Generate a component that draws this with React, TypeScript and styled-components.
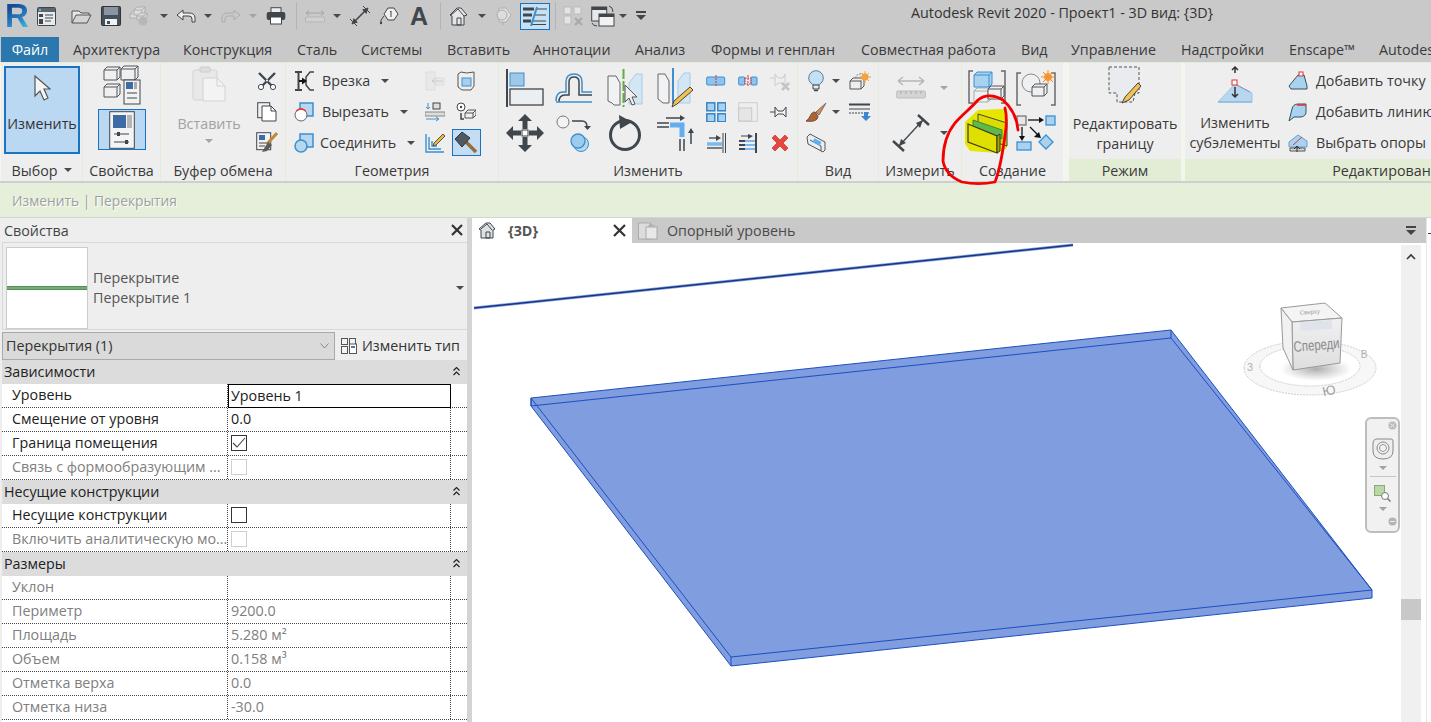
import React from 'react';
import styled, { createGlobalStyle } from 'styled-components';

const FS = '14.3px';

const Global = createGlobalStyle`
  html, body { margin: 0; padding: 0; background: #fff; }
  body { font-family: "Open Sans", "Noto Sans", sans-serif; font-size: ${FS}; color: #333; }
`;

const Page = styled.div`
  position: relative; width: 1431px; height: 722px; overflow: hidden; background: #fff;
  display: flex; flex-direction: column;
`;
const Glyph = styled.svg`display: block; flex-shrink: 0;`;
const g = (w: number, h: number, body: React.ReactNode) => (
  <Glyph width={w} height={h} viewBox={`0 0 ${w} ${h}`}>{body}</Glyph>
);

const Caret = styled.span<{ $grey?: boolean; $gap?: number }>`
  display: block; flex-shrink: 0; width: 0; height: 0;
  margin-left: ${p => p.$gap ?? 0}px;
  border-left: 4px solid transparent; border-right: 4px solid transparent;
  border-top: 4px solid ${p => (p.$grey ? '#a4a4a4' : '#4a4a4a')};
`;

/* ---------- top chrome ---------- */
const Chrome = styled.header`background: #c9c9c9; height: 62px; flex-shrink: 0; display: flex; flex-direction: column;`;
const TitleBar = styled.div`height: 37px; display: flex; align-items: flex-start;`;
const Qat = styled.div`width: 911px; height: 32px; padding-left: 4px; box-sizing: border-box; display: flex; align-items: center; flex-shrink: 0;`;
const QatSlot = styled.div<{ $w: number }>`width: ${p => p.$w}px; flex-shrink: 0; display: flex; justify-content: center; align-items: center;`;
const QatDivider = styled.span`width: 1px; height: 28px; flex-shrink: 0; background: #b4b4b4;`;
const QatToggle = styled.div`
  width: 30px; height: 27px; margin-left: 4px; flex-shrink: 0; box-sizing: border-box; border: 1px solid #1473c5; background: #c8e0f4;
  display: flex; align-items: center; justify-content: center;
`;
const LogoR = styled.span`
  font-family: "Liberation Sans", sans-serif; font-weight: 700; font-size: 33px; line-height: 28px;
  background: linear-gradient(150deg, #154a94 20%, #2a80c4 60%, #3cb6e8 90%);
  -webkit-background-clip: text; background-clip: text; color: transparent;
`;
const LetterA = styled.span`
  font-family: "Liberation Sans", sans-serif; font-weight: 700; font-size: 25px; line-height: 26px; color: ${'#3f464c'};
`;
const AppTitle = styled.div`font-size: ${FS}; line-height: 26px; color: #333; white-space: nowrap;`;
const TabBar = styled.nav`height: 25px; display: flex; align-items: stretch; padding-left: 1px; overflow: hidden;`;
const FileTab = styled.div`
  width: 58px; margin-right: 14px; flex-shrink: 0; background: #2a78ad; color: #fff; font-size: ${FS};
  display: flex; align-items: center; justify-content: center;
`;
const Tab = styled.div<{ $w: number }>`
  width: ${p => p.$w}px; flex-shrink: 0; font-size: ${FS}; color: #3a3a3a; line-height: 25px; white-space: nowrap;
`;

/* ---------- ribbon ---------- */
const Ribbon = styled.section`
  height: 118px; flex-shrink: 0; background: #f3f6ee; display: flex; padding-left: 1px; overflow: hidden;
  border-top: 1px solid #e4ecdb; box-sizing: content-box;
`;
const RibbonEdge = styled.div`height: 2px; flex-shrink: 0; background: #cfcfcf;`;
const Panel = styled.div<{ $w: number; $ctx?: boolean; $ml?: number }>`
  width: ${p => p.$w}px; flex-shrink: 0; margin-left: ${p => p.$ml ?? 0}px;
  display: flex; flex-direction: column; background: #eeeeee;
  border-right: ${p => (p.$ctx ? 'none' : '1px solid #e4ecdb')}; box-sizing: border-box;
`;
const PanelBody = styled.div`height: 96px; display: flex; padding-top: 2px; box-sizing: border-box; min-width: 0;`;
const PanelTitle = styled.div<{ $ctx?: boolean }>`
  height: 22px; display: flex; align-items: center; justify-content: center; gap: 6px;
  font-size: ${FS}; color: #3a3a3a; white-space: nowrap;
  background: ${p => (p.$ctx ? '#e3edd6' : 'transparent')};
`;
const ModifyButton = styled.div`
  margin: 1px 0 0 3px; width: 76px; height: 88px; box-sizing: border-box;
  background: #bbd8f3; border: 2px solid #1a73c2; color: #333;
  display: flex; flex-direction: column; align-items: center; padding-top: 7px; gap: 12px; font-size: ${FS};
`;
const StackCenter = styled.div`flex: 1; display: flex; flex-direction: column; align-items: center;`;
const PropsToggle = styled.div`
  margin-top: 4px; width: 48px; height: 41px; box-sizing: border-box; background: #bbd8f3; border: 1px solid #1a73c2;
  display: flex; align-items: center; justify-content: center;
`;
const PasteColumn = styled.div`
  width: 78px; margin-left: 9px; display: flex; flex-direction: column; align-items: center; color: #a2a2a2;
  padding-top: 1px; font-size: ${FS}; flex-shrink: 0;
`;
const PasteLabel = styled.span`margin: 12px 0 6px;`;
const ToolGrid = styled.div<{ $cols: string; $row: number; $ml?: number }>`
  display: grid; grid-template-columns: ${p => p.$cols}; grid-auto-rows: ${p => p.$row}px;
  place-items: center; margin-left: ${p => p.$ml ?? 0}px; flex-shrink: 0;
`;
const ToolList = styled.div<{ $w: number }>`
  width: ${p => p.$w}px; flex-shrink: 0; display: grid; grid-auto-rows: 31px;
`;
const ToolRow = styled.div<{ $pl: number }>`
  display: flex; align-items: center; padding-left: ${p => p.$pl}px; font-size: ${FS}; color: #3a3a3a; white-space: nowrap;
`;
const ToolLabel = styled.span<{ $ml: number }>`margin-left: ${p => p.$ml}px;`;
const HammerBox = styled.div`
  width: 29px; height: 27px; box-sizing: border-box; border: 1px solid #1a73c2; background: #c3def4;
  display: flex; align-items: center; justify-content: center;
`;
const TallButton = styled.div<{ $w: number; $gap: number; $ml?: number }>`
  width: ${p => p.$w}px; margin-left: ${p => p.$ml ?? 0}px; flex-shrink: 0;
  display: flex; flex-direction: column; align-items: center; text-align: center;
  gap: ${p => p.$gap}px; padding-top: 1px; font-size: ${FS}; line-height: 20px; color: #3a3a3a;
`;
const ContextBar = styled.div`
  height: 34px; flex-shrink: 0; background: #e5efd9; display: flex; align-items: center; padding-left: 12px;
  color: #a0a0a0; font-size: 13.8px; text-shadow: 1px 1px 0 #fff;
`;
const Seam = styled.div`height: 1px; flex-shrink: 0; background: #d4d4d4;`;

/* ---------- main area ---------- */
const Main = styled.main`flex: 1; min-height: 0; display: flex; background: #fff;`;
const PropsPanel = styled.aside`width: 467px; flex-shrink: 0; background: #eeeeee; overflow: hidden; display: flex; flex-direction: column;`;
const Splitter = styled.div`width: 5px; flex-shrink: 0; background: #d4d4d4;`;
const PanelHead = styled.div`
  height: 24px; flex-shrink: 0; display: flex; align-items: center; justify-content: space-between;
  padding: 0 4px 0 4px; font-size: ${FS}; color: #444;
`;
const TypeBox = styled.div`
  margin-left: 2px; height: 88px; flex-shrink: 0; box-sizing: border-box; border: 1px solid #d8d8d8; border-right: 0;
  display: flex; align-items: center; padding: 4px 3px 0; position: relative;
`;
const Preview = styled.div`
  width: 82px; height: 82px; box-sizing: border-box; background: #fff; border: 1px solid #ccc;
  display: flex; align-items: center;
`;
const PreviewLine = styled.div`width: 100%; height: 4px; background: #8c9c8c; border-top: 1px solid #3f9f3f; border-bottom: 1px solid #3f9f3f; box-sizing: border-box;`;
const TypeNames = styled.div`margin-left: 5px; flex: 1; line-height: 20px; color: #555;`;
const SelectorRow = styled.div`height: 29px; flex-shrink: 0; display: flex; margin: 1px 0 0 2px; align-items: center;`;
const Selector = styled.div`
  width: 333px; height: 28px; box-sizing: border-box; background: #dadada; border: 1px solid #a9a9a9;
  display: flex; align-items: center; justify-content: space-between; padding: 0 5px 0 3px; font-size: ${FS}; color: #333;
`;
const TypeEdit = styled.div`margin-left: 6px; display: flex; align-items: center; gap: 5px; color: #333; font-size: ${FS}; white-space: nowrap;`;
const Table = styled.div`display: flex; flex-direction: column; flex-shrink: 0; margin-left: 2px;`;
const SectionRow = styled.div`
  height: 24px; flex-shrink: 0; box-sizing: border-box; background: #dcdcdc; display: flex; align-items: center; justify-content: space-between;
  padding: 0 6px 2px 2px; color: #222; font-size: ${FS};
`;
const Row = styled.div`
  height: 24px; flex-shrink: 0; box-sizing: border-box; background: #fff; border-bottom: 1px dotted #444; display: grid;
  grid-template-columns: 226px 223px 1fr; font-size: ${FS};
`;
const NameCell = styled.div<{ $off?: boolean }>`
  padding: 0 0 2px 10px; border-right: 1px dotted #444; color: ${p => (p.$off ? '#808080' : '#222')};
  display: flex; align-items: center; white-space: nowrap; overflow: hidden;
`;
const ValueCell = styled.div<{ $off?: boolean; $active?: boolean }>`
  padding: 0 0 2px 3px; color: ${p => (p.$off ? '#808080' : '#222')}; border-right: 1px dotted #444;
  display: flex; align-items: center; white-space: nowrap; box-sizing: border-box;
  ${p => (p.$active ? 'outline: 1px solid #000; outline-offset: -1px; margin-bottom: -1px; border-right: none;' : '')}
`;
const Check = styled.span<{ $off?: boolean }>`
  width: 16px; height: 16px; box-sizing: border-box;
  border: 1px solid ${p => (p.$off ? '#cfcfcf' : '#333')}; background: #fff;
  display: flex; align-items: center; justify-content: center;
`;

const ViewColumn = styled.div`width: 954px; flex-shrink: 0; display: flex; flex-direction: column;`;
const ViewTabs = styled.div`height: 25px; flex-shrink: 0; display: flex; background: #c9c9c9; align-items: stretch;`;
const ActiveViewTab = styled.div`
  width: 160px; background: #fff; display: flex; align-items: center; padding: 0 6px 0 6px; box-sizing: border-box;
  font-weight: 700; color: #555; font-size: ${FS}; gap: 12px;
`;
const TabName = styled.span`flex: 1;`;
const ViewTab = styled.div`
  flex: 1; display: flex; align-items: center; padding-left: 6px; gap: 9px; font-size: ${FS}; color: #4a4a4a;
`;
const TabMenu = styled.div`margin-right: 8px; margin-left: auto;`;
const ViewBody = styled.div`flex: 1; min-height: 0; display: flex; position: relative; padding-right: 5px;`;
const Canvas = styled.div`flex: 1; position: relative; overflow: hidden;`;
const Model = styled.svg`position: absolute; left: 0; top: 0;`;
const Cube = styled.svg`position: absolute; left: 768px; top: 57px;`;
const ScrollTrack = styled.div`
  width: 20px; margin-top: 2px; background: #f0f0f0; flex-shrink: 0; display: flex; flex-direction: column; align-items: center;
`;
const ScrollUp = styled.div`height: 22px; display: flex; align-items: center; justify-content: center;`;
const ScrollThumb = styled.div`width: 20px; height: 21px; margin-top: 332px; background: #c8c8c8;`;
const FarEdge = styled.div`flex: 1; background: #fff; border-left: 1px solid #e6e6e6; padding-top: 15px;`;
const FarMark = styled.div`width: 3px; height: 1px; margin-left: 1px; background: #444;`;
const NavBar = styled.div`
  position: absolute; left: 893px; top: 174px; width: 35px; height: 116px; box-sizing: border-box;
  border: 2px solid #bdbdbd; border-radius: 6px; background: #f1f1f1;
  display: flex; flex-direction: column; align-items: center; padding-top: 2px;
`;
const NavClose = styled.div`align-self: flex-end; margin-right: 1px; height: 12px;`;
const NavRule = styled.div`width: 26px; height: 1px; background: #c4c4c4; margin: 6px 0 8px;`;
const NavIcon = styled.div`margin: 5px 0 6px;`;
const Annotation = styled.svg`position: absolute; left: 935px; top: 90px; pointer-events: none;`;

/* ---------- icons ---------- */
const DK = '#3f464c';
const BL = '#3c8fd0';
const LB = '#b7d7ee';

const minicube = (x: number, y: number, s: number, f = '#eef0f2', st = '#555') => (
  <g key={`${x}-${y}`}>
    <path d={`M${x} ${y + 3}L${x + 3} ${y}H${x + s + 3}V${y + s - 3}L${x + s} ${y + s}H${x}Z`} fill={f} stroke={st} />
    <path d={`M${x} ${y + 3}H${x + s}V${y + s}M${x + s} ${y + 3}L${x + s + 3} ${y}`} fill="none" stroke={st} />
  </g>
);

const Q = {
  Props: g(19, 19, <>
    <rect x=".5" y=".5" width="18" height="18" rx="1" fill="#e8eaec" stroke={DK} />
    <rect x="1" y="1" width="17" height="4" fill="#5a6670" /><rect x="2" y="2" width="2" height="2" fill="#6bb6e8" />
    <rect x="2" y="7" width="4" height="3" fill={DK} /><rect x="2" y="12" width="4" height="5" fill={DK} />
    <path d="M8 8h8M8 11h8M8 14h6" stroke={DK} />
  </>),
  Open: g(21, 15, <>
    <path d="M1 14V2h7l2 2h8v3" fill="#e6e6e6" stroke="#555" /><path d="M1 14 5 6h15l-4 8z" fill="#d4d4d4" stroke="#555" />
  </>),
  Save: g(20, 20, <>
    <rect x=".5" y=".5" width="19" height="19" rx="1" fill="#44505b" stroke="#333" />
    <rect x="3" y="1" width="14" height="8" fill="#8996a2" /><rect x="4" y="13" width="12" height="6" fill="#f1f1f1" /><rect x="6" y="15" width="3" height="3" fill="#44505b" />
  </>),
  Sync: g(21, 21, <g opacity=".85">
    {minicube(2, 5, 7, '#e0e0e0', '#aaa')}{minicube(6, 1, 8, '#e0e0e0', '#aaa')}{minicube(9, 7, 7, '#e0e0e0', '#aaa')}
    <circle cx="15" cy="15" r="4.500" fill="#b4b4b4" />
  </g>),
  Undo: g(20, 14, <path d="M1 6 7 1v3h6q6 0 6 5v4h-3v-3q0-3-3-3H7v4z" fill="#ececec" stroke="#444" />),
  Redo: g(20, 14, <path d="M19 6 13 1v3H7Q1 4 1 9v4h3v-3q0-3 3-3h6v4z" fill="none" stroke="#adadad" />),
  Print: g(20, 18, <>
    <rect x="5" y=".7" width="10" height="5" fill="#eee" stroke={DK} />
    <rect x=".7" y="5" width="18.6" height="8" rx="2" fill={DK} />
    <rect x="4.5" y="10" width="11" height="7" fill="#fff" stroke={DK} />
  </>),
  Dim: g(20, 14, <>
    <path d="M1 4h18M1 4l3-2.500M1 4l3 2.500M19 4l-3-2.500M19 4l-3 2.500" stroke="#a5a5a5" fill="none" />
    <rect x=".5" y="8" width="19" height="5" rx="1" fill="#d0d0d0" stroke="#b5b5b5" />
  </>),
  Align: g(22, 22, <>
    <path d="M3 19 19 3" stroke={DK} strokeWidth="1.600" />
    <path d="M19 3l-6 1.500 4.500 4.500zM3 19l6-1.500L4.500 13z" fill={DK} />
    <path d="M1 14l7 7M14 1l7 7" stroke={DK} />
  </>),
  Tag: g(20, 18, <>
    <path d="M9 1h6l4 6-4 6H9L5 7z" fill="#f0f0f0" stroke={DK} />
    <path d="M12 4v6M11 5l1-1" stroke={DK} fill="none" />
    <path d="M5 9 2 13v4" fill="none" stroke={DK} /><circle cx="2" cy="16" r="1.200" fill={DK} />
  </>),
  House: g(20, 19, <>
    <path d="M2 8 9 1h4l6 7-3 1v9H4V9z" fill="#e6e6e6" stroke={DK} /><path d="M3 8l7-6 6 7M9 11h4v7H9z" fill="none" stroke={DK} />
  </>),
  Gem: g(18, 20, <>
    <path d="M9 16v3" stroke="#aaa" /><path d="M5 2h7l5 7-5 7H5z" fill="#e2e2e2" stroke="#b0b0b0" /><circle cx="8" cy="9" r="5" fill="#ddd" stroke="#aaa" />
  </>),
  List: g(24, 20, <>
    <path d="M0 3h11M0 9h9M0 15h8" stroke={DK} strokeWidth="3" />
    <path d="M14 3h10M12 9h11M10 15h13M9 18.500h14" stroke={DK} />
    <path d="M14 1 8 20" stroke={BL} strokeWidth="2" />
  </>),
  Closed: g(20, 20, <>
    <rect x="1" y="1" width="7" height="7" fill="#e4e4e4" stroke="#bbb" /><rect x="11" y="1" width="7" height="7" fill="#e4e4e4" stroke="#bbb" />
    <rect x="1" y="10" width="7" height="8" fill="#e4e4e4" stroke="#bbb" /><path d="M12 12l7 7M19 12l-7 7" stroke="#a8a8a8" strokeWidth="2" />
  </>),
  Windows: g(24, 22, <>
    <rect x=".7" y="2" width="15" height="14" fill="#e8e8e8" stroke={DK} /><rect x="1" y="2" width="15" height="3" fill={DK} />
    <rect x="8" y="9" width="15" height="12" fill="#f2f2f2" stroke={DK} /><rect x="8" y="9" width="15" height="3" fill={DK} />
    <path d="M18 1q4 1 4 6M1 18q1 3 5 3" fill="none" stroke={DK} />
  </>),
  More: g(12, 10, <><rect x="0" y="0" width="10" height="2" fill="#444" /><path d="M0 4h10l-5 5z" fill="#444" /></>),
};

const R = {
  Cursor: g(18, 27, <path d="M2 1v20l5-5 4 9 4-2-4-9h6z" fill="#f4f4f4" stroke="#555" strokeWidth="1.200" />),
  Cubes: g(38, 40, <>
    {minicube(1, 2, 13)}{minicube(18, 1, 14)}{minicube(1, 19, 13)}
    <rect x="21" y="15" width="16" height="24" fill="#f2f2f2" stroke={DK} /><rect x="23" y="17" width="7" height="7" fill="#3c6ba5" /><rect x="31" y="17" width="3" height="7" fill="#aaa" />
    <path d="M24 28h10M24 33h10" stroke={DK} />
  </>),
  Panel: g(26, 38, <>
    <rect x=".7" y=".7" width="24.600" height="36.600" fill="#f4f4f4" stroke={DK} />
    <rect x="4" y="4" width="13" height="13" fill="#3e6ba6" /><rect x="18" y="4" width="5" height="13" fill="#b5b5b5" />
    <path d="M5 23h15M5 31h15" stroke={DK} /><rect x="8" y="21" width="3" height="4" fill={DK} /><rect x="16" y="29" width="3" height="4" fill={DK} />
  </>),
  Paste: g(34, 36, <>
    <rect x="1" y="4" width="24" height="30" rx="2" fill="#e8e8e8" stroke="#d3d3d3" /><rect x="8" y="1" width="10" height="5" rx="1" fill="#ddd" stroke="#ccc" />
    <path d="M11 12h14l8 8v15H11z" fill="#f3f3f3" stroke="#d3d3d3" /><path d="M25 12v8h8" fill="none" stroke="#d3d3d3" />
  </>),
  Cut: g(20, 20, <>
    <path d="M2 2 17 17M18 2 3 17" stroke={DK} strokeWidth="2.400" /><circle cx="4" cy="16" r="2.600" fill="#fff" stroke={DK} /><circle cx="16" cy="16" r="2.600" fill="#fff" stroke={DK} />
    <circle cx="10" cy="9.500" r="1" fill="#fff" />
  </>),
  Copy: g(20, 20, <>
    <rect x=".7" y=".7" width="12" height="15" fill="#f2f2f2" stroke={DK} /><path d="M5 4h9l5 5v10H5z" fill="#fff" stroke={DK} /><path d="M14 4v5h5" fill="none" stroke={DK} />
  </>),
  Match: g(22, 21, <>
    <rect x=".7" y=".7" width="14" height="17" fill="#f2f2f2" stroke={DK} /><rect x="3" y="3" width="6" height="5" fill="#3e6ba6" /><path d="M3 11h8M3 14h6" stroke={DK} />
    <path d="M21 1 11 12" stroke="#c08a3c" strokeWidth="3" /><path d="M12 10l4 3-5 6-5 1z" fill="#5a5a5a" />
  </>),
  Cope: g(21, 20, <>
    <path d="M1 1h7M1 19h7M4.500 1v18" stroke={DK} strokeWidth="2" /><path d="M20 1h-4l-4 5v8l4 5h4" fill="none" stroke={DK} strokeWidth="1.500" />
    <path d="M5 10h7" stroke="#111" strokeWidth="2" /><path d="M13 10 8 6.500v7z" fill="#111" />
  </>),
  CutGeo: g(20, 20, <>
    <rect x="6" y="1" width="13" height="13" fill={LB} stroke={BL} strokeWidth="1.500" />
    <circle cx="7" cy="13" r="6" fill="#fff" stroke="#666" />
    <path d="M2.500 9a6 6 0 0 1 9 0" fill="none" stroke="#e33" strokeWidth="1.500" />
  </>),
  Join: g(20, 20, <>
    <rect x="6" y="1" width="13" height="13" fill={LB} stroke={BL} strokeWidth="1.500" />
    <circle cx="7" cy="13" r="6" fill={LB} stroke={BL} strokeWidth="1.500" />
  </>),
  Notch: g(20, 20, <>
    <path d="M1 1h9v6h9v7H10v5H1z" fill="#e8e8e8" stroke="#ddd" /><path d="M18 10H7m0 0 4-3m-4 3 4 3" stroke="#ccc" fill="none" />
  </>),
  Wall: g(18, 20, <>
    <path d="M1 3 4 1q5 2 13 0v14l-3 4H5l-4-3z" fill="#eee" stroke="#555" /><rect x="5" y="7" width="9" height="8" fill="#a8d0ec" stroke={BL} />
  </>),
  Split: g(20, 20, <>
    <rect x="0" y="10" width="20" height="4" fill="#ddd" stroke="#888" />
    <rect x="8" y="1" width="7" height="6" fill="#ddd" stroke={DK} /><path d="M3 1v6M1 5l2 2 2-2M1 17h12M11 15l3 2-3 2" stroke={BL} fill="none" />
  </>),
  Demol: g(20, 20, <>
    <circle cx="5" cy="5" r="4" fill="#fff" stroke={DK} /><circle cx="5" cy="5" r="1.200" fill={DK} />
    <path d="M5 11v6h3" fill="none" stroke={DK} strokeWidth="1.500" />
    {minicube(9, 8, 8, '#eee', '#555')}
  </>),
  Sketch: g(20, 20, <>
    <path d="M1 1v18h18M4 4v12h12M7 8v5h5" stroke={BL} fill="none" strokeWidth="1.400" />
    <path d="M18 1l2 2-9 9-3 1 1-3z" fill="#f0b73e" stroke="#555" />
  </>),
  Hammer: g(24, 24, <>
    <path d="M11 10 22 21" stroke="#9a6b3c" strokeWidth="3.500" />
    <path d="M1 8 8 1l8 6-8 9z" fill="#4f5a64" stroke="#333" />
  </>),
  AlignBig: g(38, 38, <>
    <path d="M1 0v38" stroke={DK} strokeWidth="2" />
    <rect x="4" y="4" width="14" height="13" fill="#9fc8e6" stroke={BL} />
    <rect x="4" y="20" width="33" height="16" fill="#eceff1" stroke={DK} strokeWidth="1.300" />
  </>),
  Offset: g(38, 30, <>
    <path d="M1 28q0-9 7-9h3V9q0-8 8-8t8 8v10h10" fill="none" stroke={BL} strokeWidth="1.500" />
    <path d="M4 29q0-7 6-7h4V9q0-5 5-5t5 5v13h13" fill="none" stroke={DK} strokeWidth="1.500" />
    <path d="M1 29h36" stroke={BL} strokeWidth="1.500" />
  </>),
  Mirror: g(36, 38, <>
    <path d="M1 7h8l4 7v22H7l-2-2-4-2z" fill="#f0f2f4" stroke="#666" />
    <path d="M16.500 0v38" stroke="#5fae3e" strokeWidth="2" strokeDasharray="10 2" />
    <path d="M35 5h-6l-7 9v21h13z" fill="#d3e6f4" stroke="#a8cbe4" />
    <path d="M18 16v17l4-4 3 7 3-1-3-7h5z" fill="#f0f0f0" stroke="#555" />
  </>),
  MirrorDraw: g(36, 40, <>
    <path d="M1 6h7l4 7v22H6l-5-4z" fill="#f0f2f4" stroke="#666" />
    <path d="M16 0v36" stroke={BL} strokeWidth="2" />
    <path d="M33 5h-6l-6 8v22h12z" fill="#d3e6f4" stroke="#a8cbe4" />
    <path d="M33 19l3 3-16 14-5 3 2-6z" fill="#f2c14e" stroke="#444" />
  </>),
  Move: g(38, 38, <>
    <path d="M19 0l7 7h-4.500v8h-5V7H12zM19 38l7-7h-4.500v-8h-5v8H12zM0 19l7-7v4.500h8v5H7V26zM38 19l-7-7v4.500h-8v5h8V26z" fill={DK} />
    <rect x="16" y="16" width="6" height="6" fill="#fff" stroke={DK} />
  </>),
  Copy2: g(36, 38, <>
    <circle cx="7" cy="8" r="6" fill="#f3f3f3" stroke="#777" /><path d="M16 7h10q5 0 5 6" fill="none" stroke={DK} strokeWidth="1.500" /><path d="M28 12h7l-3.500 4z" fill={DK} />
    <circle cx="25" cy="30" r="7.500" fill={LB} stroke={BL} /><circle cx="22" cy="27" r="7" fill="#9ccbec" stroke={BL} strokeWidth="1.300" />
  </>),
  Rotate: g(34, 38, <>
    <circle cx="17" cy="21" r="14.500" fill="none" stroke={DK} strokeWidth="3" />
    <path d="M11 1 24 8 12 15z" fill={DK} />
  </>),
  Trim: g(38, 38, <>
    <path d="M1 9h12M1 13h12" stroke={DK} strokeWidth="1.500" /><path d="M14 11h12v12" fill="none" stroke="#62aef0" strokeWidth="5" />
    <path d="M24 25v12M28 25v12" stroke={DK} strokeWidth="1.500" />
    <path d="M10 4h15" stroke={DK} strokeWidth="1.500" /><path d="M24 1l5 3-5 3z" fill={DK} />
    <path d="M35 30V18" stroke={DK} strokeWidth="1.500" /><path d="M32 19l3-5 3 5z" fill={DK} />
  </>),
  SplitA: g(20, 12, <>
    <rect x=".7" y="2" width="18" height="8" rx="1" fill="#8cc4ef" stroke={BL} /><path d="M10 0v12" stroke="#d33" strokeDasharray="2 1" />
  </>),
  SplitB: g(20, 12, <>
    <rect x=".7" y="2" width="6" height="8" rx="1" fill="#8cc4ef" stroke={BL} /><rect x="13" y="2" width="6" height="8" rx="1" fill="#8cc4ef" stroke={BL} /><path d="M10 0v12" stroke="#d33" strokeDasharray="2 1" /><rect x="7" y="3" width="6" height="6" fill="none" stroke="#d33" strokeDasharray="1.500 1" />
  </>),
  NoPin: g(20, 20, <>
    <path d="M0 7h5M5 3l3 4h5l2-4v12l-2-3H8l-3 3z" fill="#efefef" stroke="#ccc" /><path d="M12 12l7 7M19 12l-7 7" stroke="#c4c4c4" strokeWidth="2.500" />
  </>),
  Array: g(20, 20, <>
    {[[0, 0], [11, 0], [0, 11], [11, 11]].map(([x, y]) => <rect key={`${x}${y}`} x={x + .8} y={y + .8} width="8" height="8" fill="#a9d2f0" stroke="#2c7fc4" strokeWidth="1.400" />)}
  </>),
  Scale: g(20, 20, <>
    <rect x=".7" y=".7" width="18.600" height="18.600" fill="#eee" stroke="#cfcfcf" /><rect x=".7" y="6" width="13" height="13" fill="#e6e6e6" stroke="#c8c8c8" />
  </>),
  Pin: g(20, 16, <>
    <path d="M0 8h5" stroke={DK} /><path d="M5 3l3 4h5l3-4v10l-3-3H8l-3 3z" fill="#f2f2f2" stroke={DK} />
  </>),
  Trim2: g(20, 20, <>
    <path d="M17 0v20M19.500 0v20" stroke={DK} /><path d="M1 11h15" stroke="#7ab9ef" strokeWidth="3.500" /><path d="M1 15h15" stroke="#555" strokeWidth="1.500" /><path d="M3 5h8" stroke={DK} strokeWidth="1.300" /><path d="M10 2l5 3-5 3z" fill={DK} />
  </>),
  Trim3: g(20, 20, <>
    <path d="M18 0v20" stroke={DK} strokeWidth="2" /><path d="M1 8h16M1 12h16M1 16h16" stroke="#7ab9ef" strokeWidth="1.800" /><path d="M1 8h6M1 12h6M1 16h6" stroke={DK} strokeWidth="1.800" /><path d="M3 3h8" stroke={DK} /><path d="M10 1l5 2-5 3z" fill={DK} />
  </>),
  Del: g(18, 18, <path d="M1 4 4 1l5 5 5-5 3 3-5 5 5 5-3 3-5-5-5 5-3-3 5-5z" fill="#e8453c" stroke="#b22" strokeWidth=".6" />),
  Bulb: g(18, 22, <>
    <circle cx="9" cy="8" r="7.300" fill="#c3e0f5" stroke="#5b7f9a" /><path d="M6 15h6v4H6z" fill="#e8e8e8" stroke={DK} /><path d="M7 20.500h4" stroke={DK} strokeWidth="1.500" />
  </>),
  Sun: g(22, 20, <>
    {minicube(1, 7, 11, '#eee', '#555')}<path d="M6 7 9 3h5" fill="none" stroke="#888" strokeDasharray="2 1" />
    <circle cx="16" cy="6" r="3.500" fill="#f0a33e" /><path d="M16 0v12M10 6h12M12 2l8 8M20 2l-8 8" stroke="#f0a33e" />
  </>),
  Brush: g(22, 20, <>
    <path d="M21 1 11 10l3 3z" fill="#c99252" stroke="#866" /><path d="M10 10c-5 0-4 6-9 9 6 1 12 0 12-5z" fill="#a9672f" stroke="#744" />
  </>),
  Thin: g(22, 18, <>
    <path d="M0 1.500h21" stroke={DK} strokeWidth="2" /><path d="M0 6h21" stroke={DK} /><path d="M0 10h21" stroke={DK} strokeDasharray="2 1" /><path d="M15 9v4h-3l5 5 5-5h-3V9z" fill="#3a86d0" />
  </>),
  Section: g(20, 20, <>
    <path d="M1 4 4 1l15 8v8l-2 2L2 11z" fill="#e9eef2" stroke="#555" /><path d="M4 7l11 6v5" fill="none" stroke="#555" /><rect x="7" y="7" width="8" height="4" transform="rotate(28 11 9)" fill="#5fb0ef" />
  </>),
  DimGrey: g(30, 23, <>
    <path d="M2 5h26M2 5l5-4M2 5l5 4M28 5l-5-4M28 5l-5 4" stroke="#b5b5b5" fill="none" strokeWidth="1.400" />
    <rect x=".7" y="15" width="28.600" height="7" rx="1" fill="#d4d4d4" stroke="#bdbdbd" /><path d="M5 15v3M10 15v3M15 15v3M20 15v3M25 15v3" stroke="#aaa" />
  </>),
  Measure: g(38, 38, <>
    <path d="M7 32 31 6" stroke={DK} strokeWidth="1.300" /><path d="M1 27 12 37M26 1l11 10" stroke={DK} strokeWidth="2.400" />
    <path d="M7 32l2-7 5 4zM31 6l-7 3 4 5z" fill={DK} />
  </>),
  Group: g(38, 36, <>
    <path d="M5 1H1v32h4M33 1h4v32h-4" fill="none" stroke="#6a6a6a" strokeWidth="1.500" />
    {minicube(6, 18, 14, '#eef0f2', '#aaa')}{minicube(6, 2, 15, '#a8d2ef', BL)}{minicube(20, 16, 13, '#f1f1f1', '#555')}
  </>),
  Assembly: g(40, 36, <>
    <path d="M5 3H1v32h4M35 3h4v32h-4" fill="none" stroke="#6a6a6a" strokeWidth="1.500" />
    <circle cx="15" cy="13" r="9" fill="#eef0f2" stroke="#888" />{minicube(16, 14, 12, '#eef0f2', '#555')}
    <circle cx="32" cy="7" r="4" fill="#f7a33a" /><path d="M32 0v14M25 7h14M27 2l10 10M37 2 27 12" stroke="#f08a2e" />
  </>),
  Folder: g(44, 48, <>
    <path d="M0 13 13 1 37 0h5v39l-9 5-28-2-5-7z" fill="#e6e600" />
    <path d="M13 5 42 14v23L13 28z" fill="#dcdc00" stroke="#444" />
    <path d="M8 11 37 21v9L8 20z" fill="#5fb84a" stroke="#3d8a2a" />
    <path d="M3 15 32 27v17L3 33z" fill="#dfdf00" stroke="#3a3a20" strokeWidth="1.200" /><path d="M32 27l3-2v17l-3 2z" fill="#a6a600" stroke="#3a3a20" />
  </>),
  Flow: g(40, 36, <>
    <rect x="1" y="1" width="9" height="9" fill="#e6e6e6" stroke="#555" /><path d="M12 5h12" stroke="#111" strokeWidth="1.300" /><path d="M23 2l5 3-5 3z" fill="#111" />
    <rect x="30" y="1" width="9" height="9" fill="#a8d2ef" stroke={BL} strokeWidth="1.300" />
    <path d="M6 12v10" stroke="#111" strokeWidth="1.300" /><path d="M3 21l3 5 3-5z" fill="#111" />
    <path d="M14 12l9 9" stroke="#111" strokeWidth="1.300" /><path d="M25 23l-7-1 5-5z" fill="#111" />
    <rect x="1" y="27" width="14" height="8" fill="#a8d2ef" stroke={BL} strokeWidth="1.300" />
    <path d="M30 20l7 7-7 7-7-7z" fill="#a8d2ef" stroke={BL} strokeWidth="1.300" />
  </>),
  EditBoundary: g(34, 40, <>
    <path d="M1 1h30v26l-4 0-2 9H9v-9H1z" fill="#e9ebee" stroke="#555" strokeDasharray="3 2" />
    <path d="M33 20l-3-3-13 14-3 6 7-3z" fill="#f2c14e" stroke="#444" />
  </>),
  Sub: g(36, 38, <>
    <path d="M18 7V1m-3 3 3-3 3 3" stroke="#333" fill="none" strokeWidth="1.500" />
    <path d="M1 36 18 18l17 9v9z" fill="#b7d7ee" stroke="#9cc4e2" /><path d="M1 36h34" stroke="#8cbbdc" strokeWidth="1.500" /><path d="M18 18 33 26" stroke="#98c" />
    <rect x="15" y="14" width="5" height="5" fill="#fff" stroke="#d33" /><path d="M18 21v10m-3-3 3 3 3-3" stroke="#333" fill="none" strokeWidth="1.500" />
  </>),
  AddPt: g(20, 20, <>
    <path d="M1 15 10 4h6l3 11v3H3z" fill="#a8d2ef" stroke="#355" /><rect x="11" y="1" width="4" height="4" fill="#fff" stroke="#d33" />
  </>),
  AddLine: g(20, 20, <>
    <path d="M1 19 4 7q1-5 6-5h8v8q0 4-5 5H6z" fill="#a8d2ef" stroke="#355" /><path d="M9 3h9" stroke="#d33" strokeWidth="1.500" />
  </>),
  Pick: g(20, 20, <>
    <path d="M1 9 10 2l9 6v6H1z" fill="#a8d2ef" stroke="#6aa0c6" /><path d="M5 12 14 4" stroke="#d33" /><path d="M2 15h15v3H2z" fill="#d8d8d8" stroke="#555" />
    <path d="M9 13v6m-3-3 3-3 3 3" stroke="#333" fill="none" />
  </>),
};

const tabs: [string, number][] = [
  ['Архитектура', 110], ['Конструкция', 114], ['Сталь', 64], ['Системы', 86], ['Вставить', 86], ['Аннотации', 102],
  ['Анализ', 76], ['Формы и генплан', 150], ['Совместная работа', 160], ['Вид', 50], ['Управление', 110],
  ['Надстройки', 108], ['Enscape™', 90], ['Autodesk', 80],
];

const chevrons = g(9, 10, <path d="M1.500 4.500 4.500 1.500 7.500 4.500M1.500 9 4.500 6 7.500 9" fill="none" stroke="#222" strokeWidth="1.200" />);
const tick = g(14, 12, <path d="M1 6l4 4 8-9" fill="none" stroke="#444" strokeWidth="1.100" />);

type PropRow = { name: string; value?: React.ReactNode; off?: boolean; active?: boolean };
const sections: { title: string; rows: PropRow[] }[] = [
  { title: 'Зависимости', rows: [
    { name: 'Уровень', value: 'Уровень 1', active: true },
    { name: 'Смещение от уровня', value: '0.0' },
    { name: 'Граница помещения', value: <Check>{tick}</Check> },
    { name: 'Связь с формообразующим ...', value: <Check $off />, off: true },
  ] },
  { title: 'Несущие конструкции', rows: [
    { name: 'Несущие конструкции', value: <Check /> },
    { name: 'Включить аналитическую мо...', value: <Check $off />, off: true },
  ] },
  { title: 'Размеры', rows: [
    { name: 'Уклон', off: true },
    { name: 'Периметр', value: '9200.0', off: true },
    { name: 'Площадь', value: '5.280 м²', off: true },
    { name: 'Объем', value: '0.158 м³', off: true },
    { name: 'Отметка верха', value: '0.0', off: true },
    { name: 'Отметка низа', value: '-30.0', off: true },
  ] },
];

const Quick = () => (
  <Qat>
    <QatSlot $w={26}><LogoR>R</LogoR></QatSlot>
    <QatSlot $w={32}>{Q.Props}</QatSlot>
    <QatSlot $w={38}>{Q.Open}</QatSlot>
    <QatSlot $w={22}>{Q.Save}</QatSlot>
    <QatSlot $w={32}>{Q.Sync}</QatSlot>
    <QatSlot $w={20}><Caret /></QatSlot>
    <QatSlot $w={23}>{Q.Undo}</QatSlot>
    <QatSlot $w={22}><Caret /></QatSlot>
    <QatSlot $w={24}>{Q.Redo}</QatSlot>
    <QatSlot $w={20}><Caret $grey /></QatSlot>
    <QatSlot $w={26}>{Q.Print}</QatSlot>
    <QatSlot $w={14}><QatDivider /></QatSlot>
    <QatSlot $w={23}>{Q.Dim}</QatSlot>
    <QatSlot $w={22}><Caret /></QatSlot>
    <QatSlot $w={24}>{Q.Align}</QatSlot>
    <QatSlot $w={34}>{Q.Tag}</QatSlot>
    <QatSlot $w={26}><LetterA>A</LetterA></QatSlot>
    <QatSlot $w={16}><QatDivider /></QatSlot>
    <QatSlot $w={20}>{Q.House}</QatSlot>
    <QatSlot $w={28}><Caret /></QatSlot>
    <QatSlot $w={14}>{Q.Gem}</QatSlot>
    <QatSlot $w={45}><QatToggle>{Q.List}</QatToggle></QatSlot>
    <QatSlot $w={0}><QatDivider /></QatSlot>
    <QatSlot $w={36}>{Q.Closed}</QatSlot>
    <QatSlot $w={24}>{Q.Windows}</QatSlot>
    <QatSlot $w={16}><Caret /></QatSlot>
    <QatSlot $w={22}>{Q.More}</QatSlot>
  </Qat>
);

const RibbonBar = () => (
  <Ribbon>
    <Panel $w={82}>
      <PanelBody><ModifyButton>{R.Cursor}<span>Изменить</span></ModifyButton></PanelBody>
      <PanelTitle>Выбор <Caret /></PanelTitle>
    </Panel>
    <Panel $w={78}>
      <PanelBody><StackCenter>{R.Cubes}<PropsToggle>{R.Panel}</PropsToggle></StackCenter></PanelBody>
      <PanelTitle>Свойства</PanelTitle>
    </Panel>
    <Panel $w={125}>
      <PanelBody>
        <PasteColumn>{R.Paste}<PasteLabel>Вставить</PasteLabel><Caret $grey /></PasteColumn>
        <ToolGrid $cols="30px" $row={31} $ml={4}><div>{R.Cut}</div><div>{R.Copy}</div><div>{R.Match}</div></ToolGrid>
      </PanelBody>
      <PanelTitle>Буфер обмена</PanelTitle>
    </Panel>
    <Panel $w={213}>
      <PanelBody>
        <ToolList $w={133}>
          <ToolRow $pl={8}>{R.Cope}<ToolLabel $ml={7}>Врезка</ToolLabel><Caret $gap={11} /></ToolRow>
          <ToolRow $pl={8}>{R.CutGeo}<ToolLabel $ml={8}>Вырезать</ToolLabel><Caret $gap={11} /></ToolRow>
          <ToolRow $pl={8}>{R.Join}<ToolLabel $ml={6}>Соединить</ToolLabel><Caret $gap={11} /></ToolRow>
        </ToolList>
        <ToolGrid $cols="31px 32px" $row={31}>
          <div>{R.Notch}</div><div>{R.Wall}</div>
          <div>{R.Split}</div><div>{R.Demol}</div>
          <div>{R.Sketch}</div><HammerBox>{R.Hammer}</HammerBox>
        </ToolGrid>
      </PanelBody>
      <PanelTitle>Геометрия</PanelTitle>
    </Panel>
    <Panel $w={299}>
      <PanelBody>
        <ToolGrid $cols="51px 48px 54px 46px" $row={45}>
          <div>{R.AlignBig}</div><div>{R.Offset}</div><div>{R.Mirror}</div><div>{R.MirrorDraw}</div>
          <div>{R.Move}</div><div>{R.Copy2}</div><div>{R.Rotate}</div><div>{R.Trim}</div>
        </ToolGrid>
        <ToolGrid $cols="32px 32px 32px" $row={31} $ml={2}>
          <div>{R.SplitA}</div><div>{R.SplitB}</div><div>{R.NoPin}</div>
          <div>{R.Array}</div><div>{R.Scale}</div><div>{R.Pin}</div>
          <div>{R.Trim2}</div><div>{R.Trim3}</div><div>{R.Del}</div>
        </ToolGrid>
      </PanelBody>
      <PanelTitle>Изменить</PanelTitle>
    </Panel>
    <Panel $w={81}>
      <PanelBody>
        <ToolGrid $cols="24px 16px 32px" $row={31} $ml={6}>
          <div>{R.Bulb}</div><Caret /><div>{R.Sun}</div>
          <div>{R.Brush}</div><Caret /><div>{R.Thin}</div>
          <div>{R.Section}</div>
        </ToolGrid>
      </PanelBody>
      <PanelTitle>Вид</PanelTitle>
    </Panel>
    <Panel $w={83}>
      <PanelBody>
        <ToolGrid $cols="48px 18px" $row={45} $ml={8}>
          <div>{R.DimGrey}</div><Caret $grey />
          <div>{R.Measure}</div><Caret />
        </ToolGrid>
      </PanelBody>
      <PanelTitle>Измерить</PanelTitle>
    </Panel>
    <Panel $w={101} $ctx>
      <PanelBody>
        <ToolGrid $cols="50px 48px" $row={45}>
          <div>{R.Group}</div><div>{R.Assembly}</div>
          <div>{R.Folder}</div><div>{R.Flow}</div>
        </ToolGrid>
      </PanelBody>
      <PanelTitle>Создание</PanelTitle>
    </Panel>
    <Panel $w={112} $ctx $ml={6}>
      <PanelBody><TallButton $w={112} $gap={8}>{R.EditBoundary}<span>Редактировать<br />границу</span></TallButton></PanelBody>
      <PanelTitle $ctx>Режим</PanelTitle>
    </Panel>
    <Panel $w={410} $ctx $ml={4}>
      <PanelBody>
        <TallButton $w={100} $gap={9}>{R.Sub}<span>Изменить<br />субэлементы</span></TallButton>
        <ToolList $w={300}>
          <ToolRow $pl={3}>{R.AddPt}<ToolLabel $ml={8}>Добавить точку</ToolLabel></ToolRow>
          <ToolRow $pl={3}>{R.AddLine}<ToolLabel $ml={8}>Добавить линию</ToolLabel></ToolRow>
          <ToolRow $pl={3}>{R.Pick}<ToolLabel $ml={8}>Выбрать опоры</ToolLabel></ToolRow>
        </ToolList>
      </PanelBody>
      <PanelTitle $ctx>Редактирование</PanelTitle>
    </Panel>
  </Ribbon>
);

const edge = '#1d4fc0';

const SlabView = () => (
  <Model width={930} height={480} viewBox="472 243 930 480">
    <path d="M474 308 1073 245" stroke="#86a4e4" strokeWidth="3" fill="none" />
    <path d="M474 308 1073 245" stroke="#1b3580" strokeWidth="1.500" fill="none" />
    <path d="M531 398 1171 330 1372 590V598L731 666 531 406Z" fill="#7f9ddf" stroke={edge} strokeWidth="1" strokeLinejoin="round" />
    <path d="M531 406 1171 338M531 398V406M531 398 731 657M1171 330V338M1171 338 1372 590M731 657 1372 590M731 657V666" fill="none" stroke={edge} strokeWidth="1" />
  </Model>
);

const ViewCube = () => (
  <Cube width={140} height={100} viewBox="1240 300 140 100">
    <defs>
      <radialGradient id="sh"><stop offset="0" stopColor="#999" stopOpacity=".8" /><stop offset="1" stopColor="#aaa" stopOpacity="0" /></radialGradient>
      <linearGradient id="fr" x1="0" y1="0" x2="0" y2="1"><stop offset="0" stopColor="#f0f0f0" /><stop offset="1" stopColor="#dedede" /></linearGradient>
    </defs>
    <path fillRule="evenodd" d="M1244 368a66 27 0 1 0 132 0a66 27 0 1 0-132 0ZM1260 366a50 20 0 1 0 100 0a50 20 0 1 0-100 0Z" fill="#f7f7f7" stroke="#cfcfcf" strokeDasharray="2 1" />
    <ellipse cx="1316" cy="369" rx="36" ry="12" fill="url(#sh)" />
    <path d="M1281 308 1325 303 1342 318 1292 322Z" fill="#f4f4f4" stroke="#999" />
    <path d="M1292 322 1342 318 1340 363 1293 370Z" fill="url(#fr)" stroke="#999" />
    <path d="M1281 308 1292 322 1293 370 1283 348Z" fill="#f1f1f1" stroke="#999" />
    <rect x="1300" y="321" width="32" height="9" fill="#dfe3ea" transform="rotate(-4 1316 325)" />
    <text fontFamily="Liberation Sans" fontSize="12" fill="#8a8a8a" textAnchor="middle" textLength="46" lengthAdjust="spacingAndGlyphs" transform="translate(1317 350) rotate(-5) scale(1 1.250)">Спереди</text>
    <text fontFamily="Liberation Sans" fontSize="6" fill="#999" textAnchor="middle" transform="translate(1310 314) rotate(-5)">Сверху</text>
    <text x="1250" y="371" fontFamily="Liberation Sans" fontSize="10" fill="#b0b0b0" textAnchor="middle">З</text>
    <text x="1364" y="358" fontFamily="Liberation Sans" fontSize="10" fill="#b0b0b0" textAnchor="middle">В</text>
    <text fontFamily="Liberation Sans" fontSize="13" fill="#a0a0a0" textAnchor="middle" transform="translate(1330 395) rotate(-12)">Ю</text>
  </Cube>
);

const navClose = g(9, 9, <><circle cx="4.500" cy="4.500" r="4" fill="#bbb" /><path d="M2.500 2.500l4 4M6.500 2.500l-4 4" stroke="#eee" /></>);
const navMin = g(9, 9, <><circle cx="4.500" cy="4.500" r="4" fill="#b4b4b4" /><path d="M2 4.500h5" stroke="#eee" /></>);
const wheel = g(22, 22, <>
  <path d="M5 1h14q2 0 2 2v10q0 8-10 8T1 13V6q0-5 4-5z" fill="#eceef0" stroke="#888" /><circle cx="11" cy="10" r="6" fill="#f2f2f2" stroke="#888" /><circle cx="11" cy="10" r="3.500" fill="none" stroke="#999" />
</>);
const zoomIc = g(17, 17, <>
  <rect x=".5" y=".5" width="10" height="10" fill="#b8d8a4" stroke="#8aa97a" /><circle cx="11" cy="11" r="3.500" fill="#fff" stroke="#777" /><path d="M13.500 13.500l3 3" stroke="#777" strokeWidth="1.500" />
</>);

export default function App() {
  return (
    <Page>
      <Global />
      <Chrome>
        <TitleBar>
          <Quick />
          <AppTitle>Autodesk Revit 2020 - Проект1 - 3D вид: {'{3D}'}</AppTitle>
        </TitleBar>
        <TabBar>
          <FileTab>Файл</FileTab>
          {tabs.map(([t, w]) => <Tab key={t} $w={w}>{t}</Tab>)}
        </TabBar>
      </Chrome>
      <RibbonBar />
      <RibbonEdge />
      <ContextBar>Изменить | Перекрытия</ContextBar>
      <Seam />
      <Main>
        <PropsPanel>
          <PanelHead>Свойства {g(12, 12, <path d="M1 1l10 10M11 1 1 11" stroke="#333" strokeWidth="2.200" />)}</PanelHead>
          <TypeBox>
            <Preview><PreviewLine /></Preview>
            <TypeNames>Перекрытие<br />Перекрытие 1</TypeNames>
            <Caret />
          </TypeBox>
          <SelectorRow>
            <Selector>Перекрытия (1) {g(9, 6, <path d="M.5.500 4.500 5 8.500.500" fill="none" stroke="#888" />)}</Selector>
            <TypeEdit>{g(16, 16, <>
              <rect x=".5" y=".5" width="6" height="6" fill="#f4f4f4" stroke="#555" /><rect x="8.500" y=".5" width="6" height="6" fill="#f4f4f4" stroke="#555" /><rect x=".5" y="8.500" width="6" height="7" fill="#f4f4f4" stroke="#555" /><rect x="8.500" y="6" width="7" height="9.500" fill="#fff" stroke="#555" /><rect x="10" y="8" width="4" height="2" fill="#4a78b0" />
            </>)}Изменить тип</TypeEdit>
          </SelectorRow>
          <Table>
            {sections.map(s => (
              <React.Fragment key={s.title}>
                <SectionRow>{s.title}{chevrons}</SectionRow>
                {s.rows.map(r => (
                  <Row key={r.name}>
                    <NameCell $off={r.off}>{r.name}</NameCell>
                    <ValueCell $off={r.off} $active={r.active}>{r.value}</ValueCell>
                  </Row>
                ))}
              </React.Fragment>
            ))}
            <Row />
          </Table>
        </PropsPanel>
        <Splitter />
        <ViewColumn>
          <ViewTabs>
            <ActiveViewTab>
              {g(18, 18, <><path d="M1 7 8 1h4l5 6-2 1v8H3V8z" fill="#dfe1e3" stroke={DK} /><path d="M3 7l6-5 5 6M8 10h4v6H8z" fill="none" stroke={DK} /></>)}
              <TabName>{'{3D}'}</TabName>
              {g(13, 13, <path d="M1 1l11 11M12 1 1 12" stroke="#333" strokeWidth="2.200" />)}
            </ActiveViewTab>
            <ViewTab>
              {g(20, 18, <><rect x=".5" y="1" width="12" height="16" fill="#dcdcdc" stroke="#aaa" /><rect x="8" y="5" width="11" height="12" fill="#e8e8e8" stroke="#aaa" /><path d="M11 5V3h4v2" fill="none" stroke="#aaa" /></>)}
              Опорный уровень
              <TabMenu>{Q.More}</TabMenu>
            </ViewTab>
          </ViewTabs>
          <ViewBody>
            <Canvas>
              <SlabView />
              <ViewCube />
            </Canvas>
            <ScrollTrack>
              <ScrollUp>{g(10, 7, <path d="M1 6 5 2l4 4" fill="none" stroke="#333" strokeWidth="1.600" />)}</ScrollUp>
              <ScrollThumb />
            </ScrollTrack>
            <NavBar>
              <NavClose>{navClose}</NavClose>
              <NavIcon>{wheel}</NavIcon>
              <Caret $grey />
              <NavRule />
              {zoomIc}
              <NavIcon><Caret $grey /></NavIcon>
              <NavClose>{navMin}</NavClose>
            </NavBar>
          </ViewBody>
        </ViewColumn>
        <FarEdge><FarMark /></FarEdge>
      </Main>
      <Annotation width={90} height={100} viewBox="935 90 90 100">
        <path d="M1018 130C1017 118 1012 108 1003 100 995 95 985 94 978 100 971 108 962 115 955 123 947 133 943 147 943 161 945 172 952 178 962 182 972 184 985 184 995 182 999 172 1003 152 1006 128 1007 118 1006 112 1005 108" fill="none" stroke="#f50000" strokeWidth="2.800" strokeLinecap="round" strokeLinejoin="round" />
      </Annotation>
    </Page>
  );
}
